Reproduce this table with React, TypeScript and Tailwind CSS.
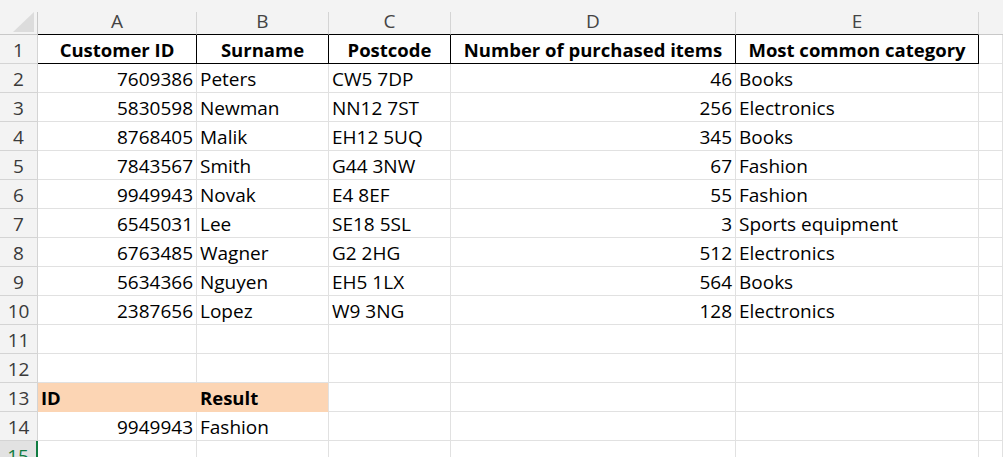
import React from "react";

type Row = {
    id?: string;
    surname?: string;
    postcode?: string;
    items?: string;
    category?: string;
};

const ROWS: Row[] = [
    { id: "7609386", surname: "Peters", postcode: "CW5 7DP", items: "46", category: "Books" },
    { id: "5830598", surname: "Newman", postcode: "NN12 7ST", items: "256", category: "Electronics" },
    { id: "8768405", surname: "Malik", postcode: "EH12 5UQ", items: "345", category: "Books" },
    { id: "7843567", surname: "Smith", postcode: "G44 3NW", items: "67", category: "Fashion" },
    { id: "9949943", surname: "Novak", postcode: "E4 8EF", items: "55", category: "Fashion" },
    { id: "6545031", surname: "Lee", postcode: "SE18 5SL", items: "3", category: "Sports equipment" },
    { id: "6763485", surname: "Wagner", postcode: "G2 2HG", items: "512", category: "Electronics" },
    { id: "5634366", surname: "Nguyen", postcode: "EH5 1LX", items: "564", category: "Books" },
    { id: "2387656", surname: "Lopez", postcode: "W9 3NG", items: "128", category: "Electronics" },
];

const COLS = ["A", "B", "C", "D", "E"];
const HEADERS = ["Customer ID", "Surname", "Postcode", "Number of purchased items", "Most common category"];

const cell = "h-[29px] border-b border-r border-[#e1e1e1] flex items-end pb-[2px] px-[3px] whitespace-nowrap overflow-hidden text-black";
const bold = " font-bold text-[18.5px]";
const rowHead = "h-[29px] border-b border-r border-[#d4d4d4] bg-[#f3f3f3] flex items-end justify-center pb-[2px] text-[#3a3a3a]";

const App = () => {
    const blank = (n: number) => (
        <>
            <div className={rowHead}>{n}</div>
            {COLS.map((c) => <div key={c} className={cell}></div>)}
            <div className={cell}></div>
        </>
    );

    return (
        <div
            className="w-[1003px] h-[457px] overflow-hidden bg-white text-[19px] leading-[22px]"
            style={{ fontFamily: "'Open Sans', 'Noto Sans', sans-serif" }}
        >
            <div className="grid grid-cols-[38px_159px_132px_122px_285px_243px_1fr]">
                {/* top strip */}
                <div className="col-span-7 h-[12px] bg-[#f3f3f3]"></div>

                {/* column headers */}
                <div className="h-[23px] bg-[#f3f3f3] border-r border-b border-[#c8c8c8] relative">
                    <svg className="absolute left-[13px] top-0" width="21" height="20" viewBox="0 0 21 20">
                        <polygon points="21,0 21,20 0,20" fill="#dcdcdc" />
                    </svg>
                </div>
                {COLS.map((c) => (
                    <div
                        key={c}
                        className="h-[23px] bg-[#f3f3f3] border-r border-[#d4d4d4] border-b border-b-black flex items-end justify-center pb-[2px] text-[#444]"
                    >
                        {c}
                    </div>
                ))}
                <div className="h-[23px] bg-[#f3f3f3] border-b border-[#c8c8c8]"></div>

                {/* row 1 */}
                <div className={rowHead}>1</div>
                {HEADERS.map((h) => (
                    <div key={h} className={cell + bold + " !border-black justify-center"}>
                        {h}
                    </div>
                ))}
                <div className={cell}></div>

                {ROWS.map((r, i) => (
                    <React.Fragment key={r.id}>
                        <div className={rowHead}>{i + 2}</div>
                        <div className={cell + " justify-end"}>{r.id}</div>
                        <div className={cell}>{r.surname}</div>
                        <div className={cell}>{r.postcode}</div>
                        <div className={cell + " justify-end"}>{r.items}</div>
                        <div className={cell}>{r.category}</div>
                        <div className={cell}></div>
                    </React.Fragment>
                ))}

                {blank(11)}
                {blank(12)}

                {/* row 13 */}
                <div className={rowHead}>13</div>
                <div className={cell + bold + " bg-[#fcd5b4] !border-[#fcd5b4]"}>ID</div>
                <div className={cell + bold + " bg-[#fcd5b4] !border-b-[#fcd5b4]"}>Result</div>
                <div className={cell}></div>
                <div className={cell}></div>
                <div className={cell}></div>
                <div className={cell}></div>

                {/* row 14 */}
                <div className={rowHead}>14</div>
                <div className={cell + " justify-end"}>9949943</div>
                <div className={cell}>Fashion</div>
                <div className={cell}></div>
                <div className={cell}></div>
                <div className={cell}></div>
                <div className={cell}></div>

                {/* row 15 */}
                <div className={rowHead + " !bg-[#e2e2e2] !text-[#107c41] !border-r-[2px] !border-r-[#107c41]"}>15</div>
                {COLS.map((c) => <div key={c} className={cell}></div>)}
                <div className={cell}></div>
            </div>
        </div>
    );
};

export default App;
